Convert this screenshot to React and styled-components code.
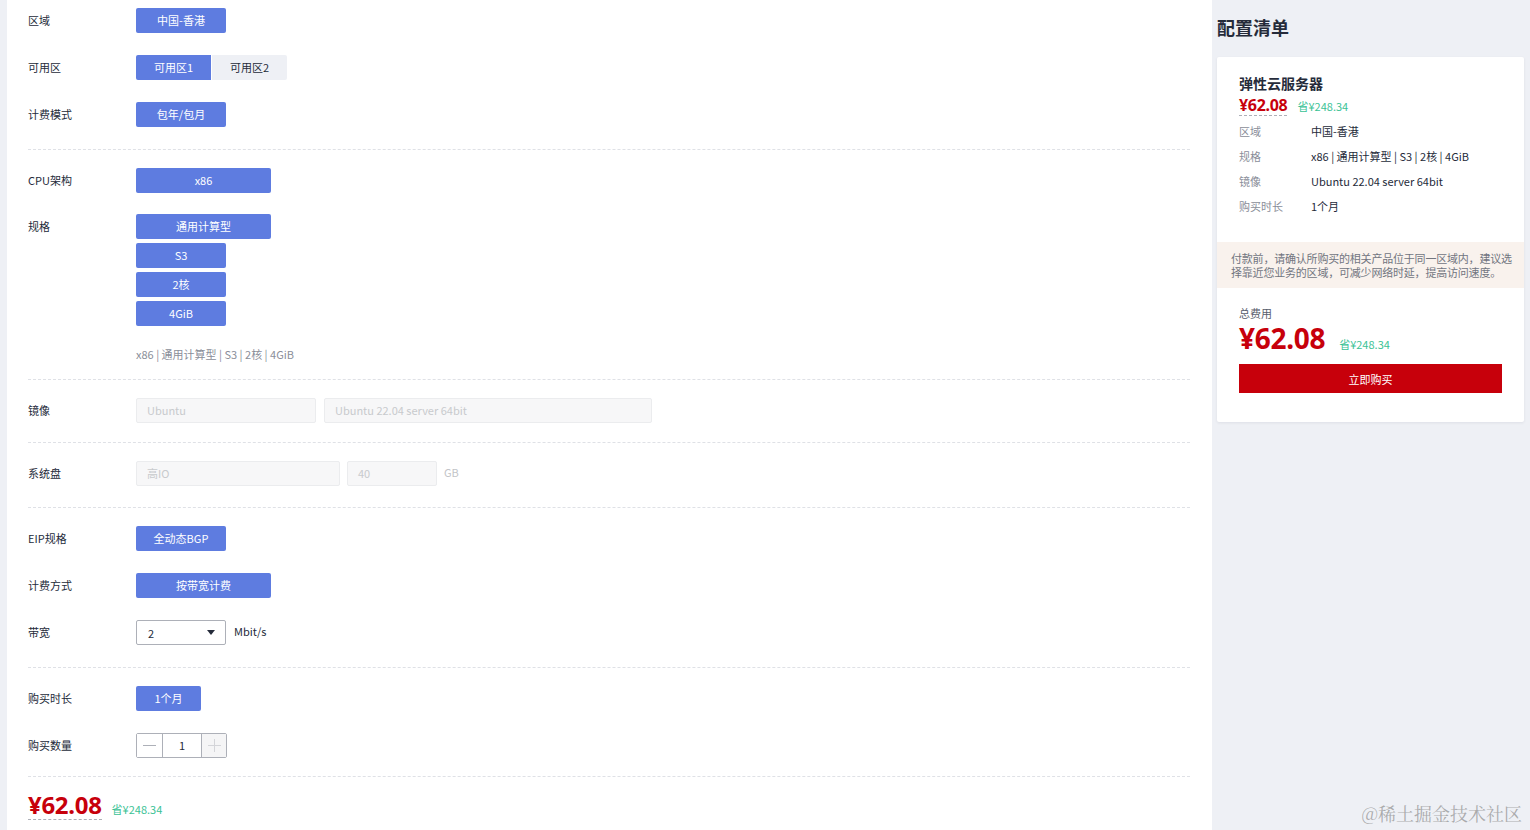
import React from "react";
import styled, { createGlobalStyle } from "styled-components";

const GlobalStyle = createGlobalStyle`
  html, body {
    margin: 0;
    padding: 0;
    background: #eef0f5;
  }
  body {
    font-family: "Noto Sans CJK SC", "Noto Sans", sans-serif;
    color: #252b3a;
    font-size: 11px;
  }
`;

const Page = styled.div`
  display: flex;
  width: 1530px;
  height: 830px;
  overflow: hidden;
  padding-left: 7px;
  box-sizing: border-box;
  position: relative;
`;

const Main = styled.main`
  width: 1205px;
  flex-shrink: 0;
  background: #fff;
  padding: 0 22px 0 21px;
  box-sizing: border-box;
`;

const Section = styled.section`
  display: flex;
  flex-direction: column;
  gap: ${({ $gap }) => $gap || 22}px;
  padding: ${({ $top }) => $top}px 0 ${({ $bottom }) => $bottom}px;
  border-bottom: ${({ $last }) => ($last ? "none" : "1px dashed #dfe1e6")};
`;

const Item = styled.div`
  display: flex;
  align-items: flex-start;
`;

const Label = styled.div`
  width: 108px;
  flex-shrink: 0;
  line-height: 25px;
  font-size: 11px;
  color: #252b3a;
`;

const Control = styled.div`
  display: flex;
  flex-direction: column;
`;

const Inline = styled.div`
  display: flex;
  align-items: center;
  gap: ${({ $gap }) => $gap ?? 8}px;
`;

const Stack = styled.div`
  display: flex;
  flex-direction: column;
  gap: 4px;
`;

const Option = styled.button`
  width: ${({ $w }) => $w}px;
  height: 25px;
  border: none;
  border-radius: 2px;
  padding: 0;
  font-family: inherit;
  font-size: 11px;
  line-height: 25px;
  cursor: pointer;
  background: ${({ $active }) => ($active ? "#5e7ce0" : "#eef0f5")};
  color: ${({ $active }) => ($active ? "#fff" : "#252b3a")};
`;

const Segment = styled.div`
  display: flex;
  gap: 1px;
  & > button:first-child { border-radius: 2px 0 0 2px; }
  & > button:last-child { border-radius: 0 2px 2px 0; }
`;

const Summary = styled.div`
  margin-top: 21px;
  line-height: 14px;
  font-size: 11px;
  color: #8a8e99;
`;

const FakeInput = styled.div`
  width: ${({ $w }) => $w}px;
  height: 25px;
  box-sizing: border-box;
  border: 1px solid #ebecee;
  background: #f7f7f8;
  border-radius: 2px;
  padding: 0 10px;
  line-height: 23px;
  color: #c8cacd;
  font-size: 11px;
`;

const Unit = styled.span`
  font-size: 11px;
  color: ${({ $muted }) => ($muted ? "#c2c4c8" : "#252b3a")};
  margin-top: ${({ $up }) => ($up ? "-3px" : "0")};
`;

const Select = styled.div`
  width: 90px;
  height: 25px;
  box-sizing: border-box;
  border: 1px solid #adb0b8;
  border-radius: 2px;
  display: flex;
  align-items: center;
  justify-content: space-between;
  padding: 0 10px 0 11px;
  font-size: 11px;
  color: #252b3a;
`;

const Caret = styled.span`
  width: 0;
  height: 0;
  border-left: 4.5px solid transparent;
  border-right: 4.5px solid transparent;
  border-top: 5px solid #252b3a;
`;

const Stepper = styled.div`
  display: flex;
  height: 25px;
  box-sizing: border-box;
  border: 1px solid #adb0b8;
  border-radius: 2px;
  width: 91px;
`;

const StepBtn = styled.div`
  width: ${({ $w }) => $w}px;
  display: flex;
  align-items: center;
  justify-content: center;
  background: ${({ $disabled }) => ($disabled ? "#f5f5f6" : "#fff")};
  border-left: ${({ $divide }) => ($divide ? "1px solid #adb0b8" : "none")};
  border-right: ${({ $divideRight }) => ($divideRight ? "1px solid #adb0b8" : "none")};
`;

const StepValue = styled.div`
  flex: 1;
  text-align: center;
  line-height: 23px;
  font-size: 11px;
  color: #252b3a;
`;

const PriceRow = styled.div`
  display: flex;
  align-items: baseline;
  gap: ${({ $gap }) => $gap}px;
  padding-top: ${({ $top }) => $top || 0}px;
`;

const Price = styled.span`
  font-family: "Noto Sans", "Noto Sans CJK SC", sans-serif;
  font-weight: 700;
  color: #c7000b;
  font-size: ${({ $size }) => $size}px;
  line-height: ${({ $lh }) => $lh}px;
  border-bottom: ${({ $dashed }) => ($dashed ? "1px dashed #adb0b8" : "none")};
  letter-spacing: -0.3px;
`;

const Save = styled.span`
  color: #3ac295;
  font-size: 11px;
`;

const Side = styled.aside`
  flex: 1;
  padding: 15px 6px 0 5px;
`;

const SideTitle = styled.h2`
  margin: 0 0 18px;
  font-size: 18px;
  line-height: 24px;
  font-weight: 700;
  color: #252b3a;
`;

const Card = styled.div`
  background: #fff;
  box-shadow: 0 1px 3px rgba(37, 43, 58, 0.08);
  border-radius: 2px;
`;

const CardHead = styled.div`
  padding: 16px 22px 27px;
`;

const CardTitle = styled.div`
  font-size: 14px;
  font-weight: 700;
  line-height: 20px;
  margin-bottom: 2px;
`;

const DetailList = styled.div`
  margin-top: 6px;
  display: grid;
  grid-template-columns: 72px 1fr;
  row-gap: 7px;
  line-height: 18px;
  font-size: 11px;
`;

const DetailKey = styled.span`
  color: #8a8e99;
`;

const DetailVal = styled.span`
  color: #252b3a;
`;

const Notice = styled.div`
  background: #f9f2ed;
  padding: 9px 0 9px 14px;
  font-size: 11px;
  line-height: 14px;
  color: #71757f;
  white-space: nowrap;
  letter-spacing: -0.2px;
`;

const CardFoot = styled.div`
  padding: 18px 22px 29px;
`;

const FootLabel = styled.div`
  font-size: 11px;
  line-height: 14px;
  color: #575d6c;
`;

const BuyButton = styled.button`
  width: 100%;
  height: 29px;
  margin-top: 8px;
  border: none;
  background: #c7000b;
  color: #fff;
  font-family: inherit;
  font-size: 11px;
  cursor: pointer;
`;

const Watermark = styled.div`
  position: absolute;
  right: 8px;
  bottom: 4px;
  font-family: "Noto Serif CJK SC", "Noto Sans CJK SC", serif;
  font-size: 18px;
  color: rgba(140, 140, 140, 0.7);
  pointer-events: none;
`;

const Line = () => (
  <svg width="13" height="13" viewBox="0 0 13 13">
    <path d="M0 6.5h13" stroke="#adb0b8" strokeWidth="1" />
  </svg>
);

const Plus = () => (
  <svg width="13" height="13" viewBox="0 0 13 13">
    <path d="M0 6.5h13M6.5 0v13" stroke="#d4d5d9" strokeWidth="1" />
  </svg>
);

export default function App() {
  return (
    <>
      <GlobalStyle />
      <Page>
        <Main>
          <Section $top={8} $bottom={22}>
            <Item>
              <Label>区域</Label>
              <Option $active $w={90}>中国-香港</Option>
            </Item>
            <Item>
              <Label>可用区</Label>
              <Segment>
                <Option $active $w={75}>可用区1</Option>
                <Option $w={75}>可用区2</Option>
              </Segment>
            </Item>
            <Item>
              <Label>计费模式</Label>
              <Option $active $w={90}>包年/包月</Option>
            </Item>
          </Section>

          <Section $top={18} $bottom={18} $gap={21}>
            <Item>
              <Label>CPU架构</Label>
              <Option $active $w={135}>x86</Option>
            </Item>
            <Item>
              <Label>规格</Label>
              <Control>
                <Stack>
                  <Option $active $w={135}>通用计算型</Option>
                  <Option $active $w={90}>S3</Option>
                  <Option $active $w={90}>2核</Option>
                  <Option $active $w={90}>4GiB</Option>
                </Stack>
                <Summary>x86 | 通用计算型 | S3 | 2核 | 4GiB</Summary>
              </Control>
            </Item>
          </Section>

          <Section $top={18} $bottom={19}>
            <Item>
              <Label>镜像</Label>
              <Inline>
                <FakeInput $w={180}>Ubuntu</FakeInput>
                <FakeInput $w={328}>Ubuntu 22.04 server 64bit</FakeInput>
              </Inline>
            </Item>
          </Section>

          <Section $top={18} $bottom={21}>
            <Item>
              <Label>系统盘</Label>
              <Inline $gap={7}>
                <FakeInput $w={204}>高IO</FakeInput>
                <FakeInput $w={90}>40</FakeInput>
                <Unit $muted $up>GB</Unit>
              </Inline>
            </Item>
          </Section>

          <Section $top={18} $bottom={22}>
            <Item>
              <Label>EIP规格</Label>
              <Option $active $w={90}>全动态BGP</Option>
            </Item>
            <Item>
              <Label>计费方式</Label>
              <Option $active $w={135}>按带宽计费</Option>
            </Item>
            <Item>
              <Label>带宽</Label>
              <Inline>
                <Select>
                  2
                  <Caret />
                </Select>
                <Unit $up>Mbit/s</Unit>
              </Inline>
            </Item>
          </Section>

          <Section $top={18} $bottom={18}>
            <Item>
              <Label>购买时长</Label>
              <Option $active $w={65}>1个月</Option>
            </Item>
            <Item>
              <Label>购买数量</Label>
              <Stepper>
                <StepBtn $w={25} $divideRight>
                  <Line />
                </StepBtn>
                <StepValue>1</StepValue>
                <StepBtn $w={24} $divide $disabled>
                  <Plus />
                </StepBtn>
              </Stepper>
            </Item>
          </Section>

          <PriceRow $gap={10} $top={14}>
            <Price $size={24} $lh={28} $dashed>¥62.08</Price>
            <Save>省¥248.34</Save>
          </PriceRow>
        </Main>

        <Side>
          <SideTitle>配置清单</SideTitle>
          <Card>
            <CardHead>
              <CardTitle>弹性云服务器</CardTitle>
              <PriceRow $gap={10}>
                <Price $size={16} $lh={20} $dashed>¥62.08</Price>
                <Save>省¥248.34</Save>
              </PriceRow>
              <DetailList>
                <DetailKey>区域</DetailKey>
                <DetailVal>中国-香港</DetailVal>
                <DetailKey>规格</DetailKey>
                <DetailVal>x86 | 通用计算型 | S3 | 2核 | 4GiB</DetailVal>
                <DetailKey>镜像</DetailKey>
                <DetailVal>Ubuntu 22.04 server 64bit</DetailVal>
                <DetailKey>购买时长</DetailKey>
                <DetailVal>1个月</DetailVal>
              </DetailList>
            </CardHead>
            <Notice>
              付款前，请确认所购买的相关产品位于同一区域内，建议选
              <br />
              择靠近您业务的区域，可减少网络时延，提高访问速度。
            </Notice>
            <CardFoot>
              <FootLabel>总费用</FootLabel>
              <PriceRow $gap={14}>
                <Price $size={28} $lh={36}>¥62.08</Price>
                <Save>省¥248.34</Save>
              </PriceRow>
              <BuyButton>立即购买</BuyButton>
            </CardFoot>
          </Card>
        </Side>

        <Watermark>@稀土掘金技术社区</Watermark>
      </Page>
    </>
  );
}
